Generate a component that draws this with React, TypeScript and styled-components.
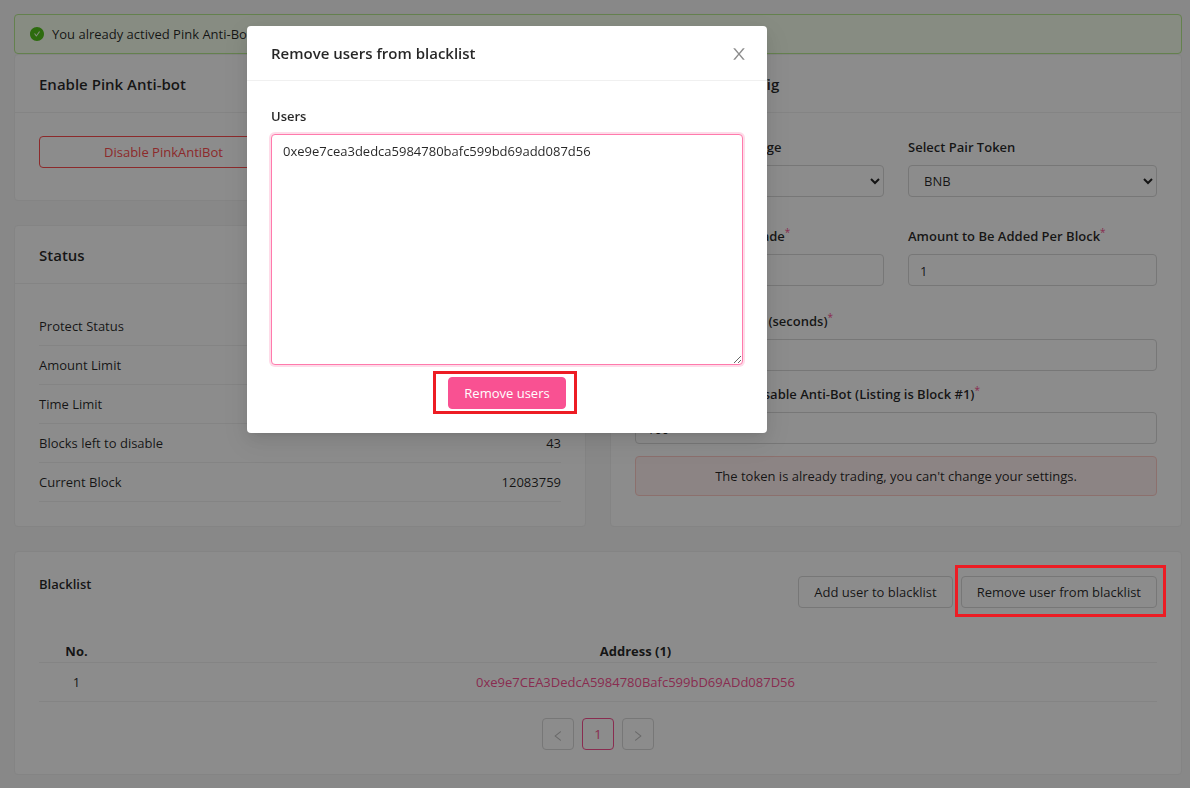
import React from "react";
import styled, { createGlobalStyle, css } from "styled-components";

const pink = "#f95192";

const GlobalStyle = createGlobalStyle`
  *, *::before, *::after { box-sizing: border-box; }
  body {
    margin: 0;
    background: #f7f7f7;
    color: rgba(0, 0, 0, 0.85);
    font: 400 13px/22px "Open Sans", "Noto Sans", sans-serif;
  }
  button, input, select, textarea { font: inherit; color: inherit; margin: 0; }
  h1, h2 { margin: 0; }
`;

const Page = styled.main`
  padding: 14px 8px 14px 14px;
`;

const Alert = styled.div<{ $kind: "success" | "error" }>`
  display: flex;
  align-items: center;
  justify-content: ${(p) => (p.$kind === "error" ? "center" : "flex-start")};
  gap: 8px;
  padding: 8px 15px;
  border-radius: 4px;
  border: 1px solid ${(p) => (p.$kind === "error" ? "#ffccc7" : "#b7eb8f")};
  background: ${(p) => (p.$kind === "error" ? "#fff1f0" : "#f6ffed")};
`;

const Columns = styled.div`
  display: grid;
  grid-template-columns: 1fr 1fr;
  column-gap: 24px;
`;

const Stack = styled.div`
  display: flex;
  flex-direction: column;
  gap: 24px;
`;

const Card = styled.section`
  background: #fff;
  border: 1px solid #f0f0f0;
  border-radius: 4px;
`;

const CardHead = styled.header`
  padding: 18px 24px 17px;
  border-bottom: 1px solid #f0f0f0;
`;

const Title = styled.h2`
  font-size: 15px;
  line-height: 22px;
  font-weight: 600;
`;

const CardBody = styled.div`
  padding: 23px 24px 24px;
`;

const Button = styled.button<{ $kind?: "primary" | "danger"; $block?: boolean }>`
  height: 32px;
  padding: 0 15px;
  border: 1px solid #d9d9d9;
  border-radius: 4px;
  background: #fff;
  line-height: 22px;
  white-space: nowrap;
  cursor: pointer;
  ${(p) => p.$block && css`width: 100%;`}
  ${(p) =>
    p.$kind === "danger" &&
    css`
      color: #ff4d4f;
      border-color: #ff4d4f;
    `}
  ${(p) =>
    p.$kind === "primary" &&
    css`
      color: #fff;
      background: ${pink};
      border-color: ${pink};
    `}
`;

const ButtonRow = styled(Columns)`
  padding-bottom: 8px;
`;

const StatusList = styled.dl`
  margin: 0;
`;

const StatusRow = styled.div`
  display: flex;
  justify-content: space-between;
  padding: 8px 0;
  border-bottom: 1px solid #f0f0f0;
  dd { margin: 0; }
`;

const Form = styled.form`
  display: flex;
  flex-direction: column;
  gap: 12px;
`;

const FieldPair = styled(Columns)<{ $gap: number }>`
  padding-bottom: ${(p) => p.$gap}px;
`;

const Field = styled.div`
  display: flex;
  flex-direction: column;
  gap: 7px;
`;

const Label = styled.label`
  font-weight: 600;
  line-height: 22px;
  white-space: nowrap;
`;

const Required = styled.sup`
  color: ${pink};
  font-size: 10px;
  font-weight: 400;
  line-height: 0;
`;

const control = css`
  width: 100%;
  height: 32px;
  padding: 4px 11px;
  border: 1px solid #d9d9d9;
  border-radius: 4px;
  background: #fff;
  outline: none;
`;

const Input = styled.input`
  ${control}
  padding: 5px 11px 3px;
`;

const Select = styled.select`${control}`;

const BlacklistHead = styled.div`
  display: flex;
  justify-content: space-between;
  align-items: flex-start;
  margin-bottom: 32px;
`;

const BlacklistTitle = styled.h2`
  font-size: 13px;
  line-height: 16px;
  font-weight: 600;
`;

const BlacklistBody = styled.div`
  padding: 24px;
`;

const Actions = styled.div`
  display: flex;
  gap: 8px;
`;

const Highlight = styled.div<{ $inset: string }>`
  position: relative;
  &::after {
    content: "";
    position: absolute;
    z-index: 20;
    inset: ${(p) => p.$inset};
    border: 3px solid #ed1c24;
    pointer-events: none;
  }
`;

const Table = styled.table`
  width: 100%;
  border-collapse: separate;
  border-spacing: 0;
  text-align: center;
  th, td {
    border-bottom: 1px solid #f0f0f0;
    padding: 8px 0;
  }
  th {
    padding: 0;
    font-weight: 700;
  }
  th:first-child { width: 75px; }
  a {
    color: ${pink};
    text-decoration: none;
  }
`;

const Pagination = styled.nav`
  display: flex;
  justify-content: center;
  gap: 8px;
  margin-top: 16px;
`;

const PageButton = styled.button<{ $current?: boolean }>`
  display: flex;
  align-items: center;
  justify-content: center;
  width: 32px;
  height: 32px;
  padding: 0;
  border: 1px solid ${(p) => (p.$current ? pink : "#d9d9d9")};
  border-radius: 4px;
  background: #fff;
  color: ${(p) => (p.$current ? pink : "rgba(0, 0, 0, 0.25)")};
  svg { margin-top: 4px; }
`;

const Mask = styled.div`
  position: fixed;
  inset: 0;
  z-index: 10;
  padding: 26px 24px 24px 247px;
  background: rgba(0, 0, 0, 0.45);
`;

const Modal = styled.div`
  width: 100%;
  max-width: 520px;
  background: #fff;
  border-radius: 4px;
  box-shadow: 0 3px 6px -4px rgba(0, 0, 0, 0.12), 0 6px 16px rgba(0, 0, 0, 0.08),
    0 9px 28px 8px rgba(0, 0, 0, 0.05);
`;

const ModalHead = styled.header`
  display: flex;
  align-items: center;
  justify-content: space-between;
  padding: 16px 20px 16px 24px;
  border-bottom: 1px solid #f0f0f0;
`;

const CloseButton = styled.button`
  display: flex;
  padding: 2px 0 0;
  border: 0;
  background: none;
  color: rgba(0, 0, 0, 0.45);
  cursor: pointer;
`;

const ModalBody = styled.div`
  display: flex;
  flex-direction: column;
  gap: 12px;
  padding: 24px;
`;

const TextArea = styled.textarea`
  ${control}
  display: block;
  height: 231px;
  padding: 5px 11px;
  border-color: #ff7aac;
  box-shadow: 0 0 0 2px rgba(249, 81, 146, 0.2);
  resize: vertical;
`;

const ModalFooter = styled.footer`
  display: flex;
  justify-content: center;
`;

const icons = {
  check:
    "M512 64C264.6 64 64 264.6 64 512s200.6 448 448 448 448-200.6 448-448S759.4 64 512 64zm193.5 301.7l-210.6 292a31.8 31.8 0 01-51.7 0L318.5 484.9c-3.8-5.3 0-12.7 6.5-12.7h46.9c10.2 0 19.9 4.9 25.9 13.3l71.2 98.8 157.2-218c6-8.3 15.6-13.3 25.9-13.3H699c6.5 0 10.3 7.4 6.5 12.7z",
  close:
    "M563.8 512l262.5-312.9c4.4-5.2.7-13.1-6.1-13.1h-79.8c-4.7 0-9.2 2.1-12.3 5.7L511.6 449.8 295.1 191.7c-3-3.6-7.5-5.7-12.3-5.7H203c-6.8 0-10.5 7.9-6.1 13.1L459.4 512 196.9 824.9A7.95 7.95 0 00203 838h79.8c4.7 0 9.2-2.1 12.3-5.7l216.5-258.1 216.5 258.1c3 3.6 7.5 5.7 12.3 5.7h79.8c6.8 0 10.5-7.9 6.1-13.1L563.8 512z",
  left:
    "M724 218.3V141c0-6.7-7.7-10.4-12.9-6.3L260.3 486.8a31.86 31.86 0 000 50.3l450.8 352.1c5.3 4.1 12.9.4 12.9-6.3v-77.3c0-4.9-2.3-9.6-6.1-12.6l-360-281 360-281.1c3.8-3 6.1-7.7 6.1-12.6z",
  right:
    "M765.7 486.8L314.9 134.7A7.97 7.97 0 00302 141v77.3c0 4.9 2.3 9.6 6.1 12.6l360 281.1-360 281.1c-3.9 3-6.1 7.7-6.1 12.6V883c0 6.7 7.7 10.4 12.9 6.3l450.8-352.1a31.96 31.96 0 000-50.4z",
};

function Icon({ name, size, color }: { name: keyof typeof icons; size: number; color?: string }) {
  return (
    <svg viewBox="64 64 896 896" width={size} height={size} fill={color ?? "currentColor"} aria-hidden="true">
      <path d={icons[name]} />
    </svg>
  );
}

const statuses = [
  ["Protect Status", "Enabled"],
  ["Amount Limit", "1"],
  ["Time Limit", "1"],
  ["Blocks left to disable", "43"],
  ["Current Block", "12083759"],
];

function TextField({ id, label, value }: { id: string; label: string; value: string }) {
  return (
    <Field>
      <Label htmlFor={id}>
        {label}
        <Required>*</Required>
      </Label>
      <Input id={id} defaultValue={value} />
    </Field>
  );
}

function SelectField({ id, label, option }: { id: string; label: string; option: string }) {
  return (
    <Field>
      <Label htmlFor={id}>{label}</Label>
      <Select id={id}>
        <option>{option}</option>
      </Select>
    </Field>
  );
}

export default function App() {
  return (
    <>
      <GlobalStyle />
      <Page>
        <Alert $kind="success" role="status">
          <Icon name="check" size={14} color="#52c41a" />
          <span>You already actived Pink Anti-Bot</span>
        </Alert>
        <Stack>
          <Columns>
            <Stack>
              <Card>
                <CardHead>
                  <Title>Enable Pink Anti-bot</Title>
                </CardHead>
                <CardBody>
                  <ButtonRow>
                    <Button $kind="danger" $block type="button">
                      Disable PinkAntiBot
                    </Button>
                  </ButtonRow>
                </CardBody>
              </Card>
              <Card>
                <CardHead>
                  <Title>Status</Title>
                </CardHead>
                <CardBody>
                  <StatusList>
                    {statuses.map(([name, value]) => (
                      <StatusRow key={name}>
                        <dt>{name}</dt>
                        <dd>{value}</dd>
                      </StatusRow>
                    ))}
                  </StatusList>
                </CardBody>
              </Card>
            </Stack>
            <Card>
              <CardHead>
                <Title>Pink Anti-bot Config</Title>
              </CardHead>
              <CardBody>
                <Form>
                  <FieldPair $gap={16}>
                    <SelectField id="router" label="Select Router Exchange" option="Pancakeswap" />
                    <SelectField id="pair" label="Select Pair Token" option="BNB" />
                  </FieldPair>
                  <FieldPair $gap={12}>
                    <TextField id="amount" label="Amount Limit Per Trade" value="1" />
                    <TextField id="added" label="Amount to Be Added Per Block" value="1" />
                  </FieldPair>
                  <TextField id="time" label="Time Limit Per Trade (seconds)" value="1" />
                  <TextField
                    id="blocks"
                    label="Number Blocks to Disable Anti-Bot (Listing is Block #1)"
                    value="100"
                  />
                  <Alert $kind="error" role="alert">
                    The token is already trading, you can't change your settings.
                  </Alert>
                </Form>
              </CardBody>
            </Card>
          </Columns>
          <Card>
            <BlacklistBody>
              <BlacklistHead>
                <BlacklistTitle>Blacklist</BlacklistTitle>
                <Actions>
                  <Button type="button">Add user to blacklist</Button>
                  <Highlight $inset="-11px -9px -9px -6px">
                    <Button type="button">Remove user from blacklist</Button>
                  </Highlight>
                </Actions>
              </BlacklistHead>
              <Table>
                <thead>
                  <tr>
                    <th scope="col">No.</th>
                    <th scope="col">Address (1)</th>
                  </tr>
                </thead>
                <tbody>
                  <tr>
                    <td>1</td>
                    <td>
                      <a href="#address">0xe9e7CEA3DedcA5984780Bafc599bD69ADd087D56</a>
                    </td>
                  </tr>
                </tbody>
              </Table>
              <Pagination aria-label="Blacklist pages">
                <PageButton type="button" disabled aria-label="Previous page">
                  <Icon name="left" size={12} />
                </PageButton>
                <PageButton type="button" $current aria-current="page">
                  1
                </PageButton>
                <PageButton type="button" disabled aria-label="Next page">
                  <Icon name="right" size={12} />
                </PageButton>
              </Pagination>
            </BlacklistBody>
          </Card>
        </Stack>
      </Page>
      <Mask>
        <Modal role="dialog" aria-modal="true" aria-labelledby="modal-title">
          <ModalHead>
            <Title id="modal-title">Remove users from blacklist</Title>
            <CloseButton type="button" aria-label="Close">
              <Icon name="close" size={16} />
            </CloseButton>
          </ModalHead>
          <ModalBody>
            <Field>
              <Label htmlFor="users">Users</Label>
              <TextArea id="users" defaultValue="0xe9e7cea3dedca5984780bafc599bd69add087d56" />
            </Field>
            <ModalFooter>
              <Highlight $inset="-6px -11px -5px -15px">
                <Button $kind="primary" type="button">
                  Remove users
                </Button>
              </Highlight>
            </ModalFooter>
          </ModalBody>
        </Modal>
      </Mask>
    </>
  );
}
